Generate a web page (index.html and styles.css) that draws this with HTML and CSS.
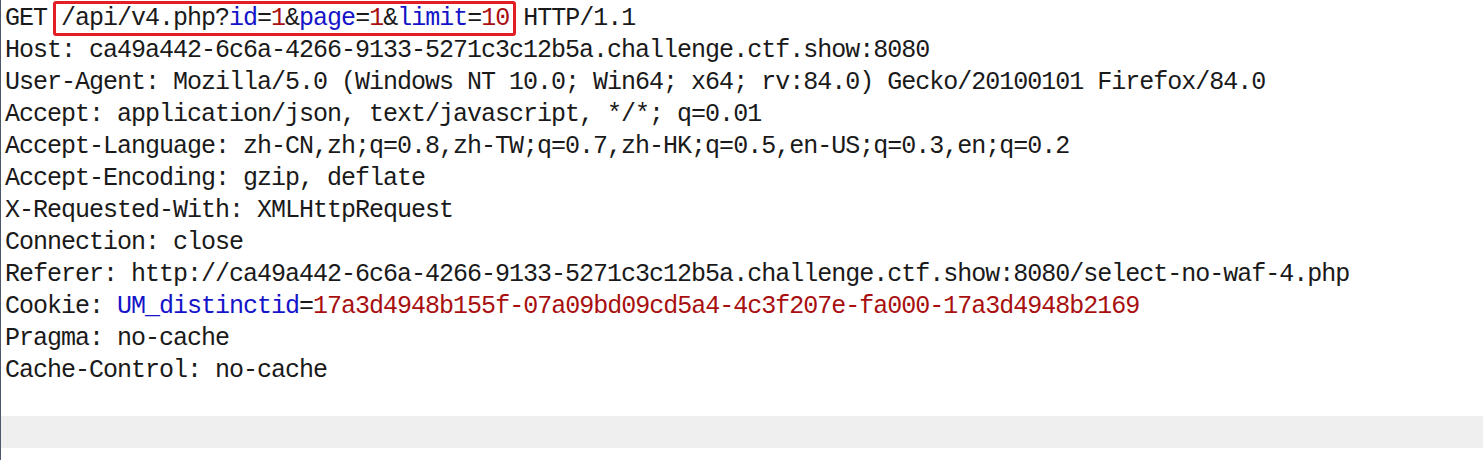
FILE: index.html
```html
<!DOCTYPE html>
<html>
<head>
<meta charset="utf-8">
<link rel="stylesheet" href="styles.css">
</head>
<body>
<div class="editor">
  <div class="content">
    <div class="line">GET <span class="hl">/api/v4.php?<span class="k">id</span>=<span class="v">1</span>&amp;<span class="k">page</span>=<span class="v">1</span>&amp;<span class="k">limit</span>=<span class="v">10</span></span> HTTP/1.1</div>
    <div class="line">Host: ca49a442-6c6a-4266-9133-5271c3c12b5a.challenge.ctf.show:8080</div>
    <div class="line">User-Agent: Mozilla/5.0 (Windows NT 10.0; Win64; x64; rv:84.0) Gecko/20100101 Firefox/84.0</div>
    <div class="line">Accept: application/json, text/javascript, */*; q=0.01</div>
    <div class="line">Accept-Language: zh-CN,zh;q=0.8,zh-TW;q=0.7,zh-HK;q=0.5,en-US;q=0.3,en;q=0.2</div>
    <div class="line">Accept-Encoding: gzip, deflate</div>
    <div class="line">X-Requested-With: XMLHttpRequest</div>
    <div class="line">Connection: close</div>
    <div class="line">Referer: http://ca49a442-6c6a-4266-9133-5271c3c12b5a.challenge.ctf.show:8080/select-no-waf-4.php</div>
    <div class="line">Cookie: <span class="k">UM_distinctid</span>=<span class="v">17a3d4948b155f-07a09bd09cd5a4-4c3f207e-fa000-17a3d4948b2169</span></div>
    <div class="line">Pragma: no-cache</div>
    <div class="line">Cache-Control: no-cache</div>
  </div>
  <div class="band"></div>
</div>
</body>
</html>
```
FILE: styles.css
```css
html, body {
  margin: 0;
  padding: 0;
  background: #ffffff;
}
.editor {
  height: 460px;
  border-left: 1px solid #4d5868;
  box-sizing: border-box;
  display: flex;
  flex-direction: column;
}
.content {
  padding: 3px 0 29px 4px;
  font-family: "Liberation Mono", monospace;
  font-size: 25px;
  letter-spacing: -1px;
  color: #1a1a1a;
  line-height: 32px;
}
.line {
  height: 32px;
  white-space: pre;
}
.k {
  color: #1414c8;
}
.v {
  color: #a81010;
}
.hl {
  position: relative;
  display: inline-block;
  line-height: 32px;
}
.hl::after {
  content: "";
  position: absolute;
  top: -2px;
  bottom: -1px;
  left: -8px;
  right: -7px;
  border: 3px solid #e41e26;
  border-radius: 3px;
}
.band {
  height: 32px;
  background: #efefef;
}
```
